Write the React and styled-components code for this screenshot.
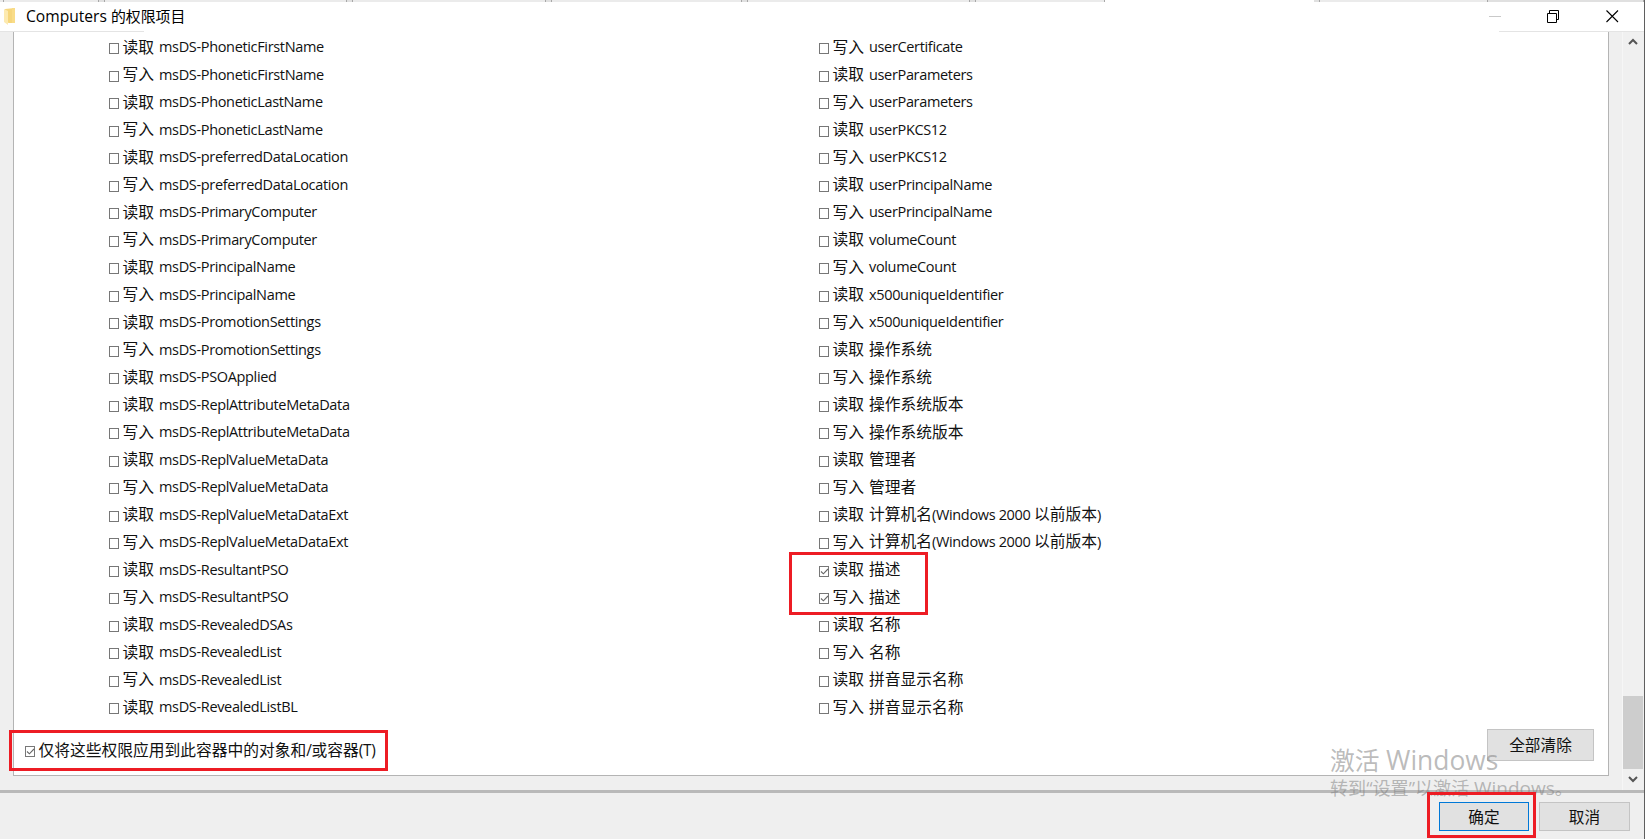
import React, { Fragment } from "react"
import styled, { createGlobalStyle } from "styled-components"

const READ = "读取"
const WRITE = "写入"

const leftItems = [
    [READ, "msDS-PhoneticFirstName"],
    [WRITE, "msDS-PhoneticFirstName"],
    [READ, "msDS-PhoneticLastName"],
    [WRITE, "msDS-PhoneticLastName"],
    [READ, "msDS-preferredDataLocation"],
    [WRITE, "msDS-preferredDataLocation"],
    [READ, "msDS-PrimaryComputer"],
    [WRITE, "msDS-PrimaryComputer"],
    [READ, "msDS-PrincipalName"],
    [WRITE, "msDS-PrincipalName"],
    [READ, "msDS-PromotionSettings"],
    [WRITE, "msDS-PromotionSettings"],
    [READ, "msDS-PSOApplied"],
    [READ, "msDS-ReplAttributeMetaData"],
    [WRITE, "msDS-ReplAttributeMetaData"],
    [READ, "msDS-ReplValueMetaData"],
    [WRITE, "msDS-ReplValueMetaData"],
    [READ, "msDS-ReplValueMetaDataExt"],
    [WRITE, "msDS-ReplValueMetaDataExt"],
    [READ, "msDS-ResultantPSO"],
    [WRITE, "msDS-ResultantPSO"],
    [READ, "msDS-RevealedDSAs"],
    [READ, "msDS-RevealedList"],
    [WRITE, "msDS-RevealedList"],
    [READ, "msDS-RevealedListBL"],
]

const rightItems = [
    [WRITE, "userCertificate"],
    [READ, "userParameters"],
    [WRITE, "userParameters"],
    [READ, "userPKCS12"],
    [WRITE, "userPKCS12"],
    [READ, "userPrincipalName"],
    [WRITE, "userPrincipalName"],
    [READ, "volumeCount"],
    [WRITE, "volumeCount"],
    [READ, "x500uniqueIdentifier"],
    [WRITE, "x500uniqueIdentifier"],
    [READ, "操作系统"],
    [WRITE, "操作系统"],
    [READ, "操作系统版本"],
    [WRITE, "操作系统版本"],
    [READ, "管理者"],
    [WRITE, "管理者"],
    [READ, "计算机名(Windows 2000 以前版本)"],
    [WRITE, "计算机名(Windows 2000 以前版本)"],
    [READ, "描述", true],
    [WRITE, "描述", true],
    [READ, "名称"],
    [WRITE, "名称"],
    [READ, "拼音显示名称"],
    [WRITE, "拼音显示名称"],
]

// Latin runs are set a little smaller than the Chinese glyphs around them
const Mixed = ({ text }) =>
    text.split(/([\x20-\x7e]+)/).map((part, i) => (
        i % 2 ? <Latin key={i}>{part}</Latin> : <Fragment key={i}>{part}</Fragment>
    ))

const CheckMark = () => (
    <svg width="9" height="9" viewBox="0 0 9 9" fill="none" stroke="#666" strokeWidth="1.1">
        <path d="M1 4.5L3.4 6.8L8 2" />
    </svg>
)

const Permission = ({ action, name, checked }) => (
    <Item>
        <CheckBox>{checked && <CheckMark />}</CheckBox>
        <Action>{action}</Action>
        <Name><Mixed text={name} /></Name>
    </Item>
)

const PermissionEntryPage = () => {
    return (
        <Window>
            <GlobalStyle />
            <Backdrop>
                <Tab $width={4} />
                <Tab $width={95} />
                <Tab $width={6} $gap />
                <Tab $width={242} />
                <Tab $width={6} $gap />
                <Tab $width={193} />
                <Tab $width={6} $gap />
                <Tab $width={190} />
                <Tab $width={6} $gap />
                <Tab $width={222} />
                <Tab $width={6} $gap />
                <Tab $width={129} />
                <Blank />
                <Tab $width={6} $gap />
                <Tab $width={168} />
                <Tab $width={156} $gap />
            </Backdrop>
            <TitleBar>
                <svg width="14" height="18" viewBox="0 0 14 18">
                    <path d="M1 1L11 0V15H5L1 14Z" fill="#f6d67c" />
                    <path d="M0 1L4 3V17L0 14Z" fill="#fdeab0" />
                    <path d="M8 0H11V15H8Z" fill="#f9dc88" />
                </svg>
                <Title>Computers <span>的权限项目</span></Title>
                <Controls>
                    <svg width="12" height="13" stroke="#c9c9c9"><path d="M0 6.5H12" /></svg>
                    <svg width="13" height="13" fill="none" stroke="#000">
                        <path d="M0.5 3.5H9.5V12.5H0.5ZM2.5 3.5V0.5H11.5V9.5H9.5" />
                    </svg>
                    <svg width="13" height="13" stroke="#000" strokeWidth="1.1">
                        <path d="M0.5 0.5L12 12M12 0.5L0.5 12" />
                    </svg>
                </Controls>
            </TitleBar>
            <TitleEdge />
            <Body>
                <Panel>
                    <Columns>
                        <Column>
                            {leftItems.map(([action, name], i) => (
                                <Permission key={i} action={action} name={name} />
                            ))}
                        </Column>
                        <Column>
                            {rightItems.map(([action, name, checked], i) => (
                                <Permission key={i} action={action} name={name} checked={checked} />
                            ))}
                            <DescriptionFrame />
                        </Column>
                    </Columns>
                    <PanelFooter>
                        <ApplyOnly>
                            <CheckBox><CheckMark /></CheckBox>
                            <Action><Mixed text="仅将这些权限应用到此容器中的对象和/或容器(T)" /></Action>
                            <ApplyFrame />
                        </ApplyOnly>
                        <ClearButton>全部清除</ClearButton>
                    </PanelFooter>
                </Panel>
                <ScrollBar>
                    <svg width="10" height="8" fill="none" stroke="#555" strokeWidth="2"><path d="M1 6L5 2L9 6" /></svg>
                    <Thumb />
                    <svg width="10" height="8" fill="none" stroke="#555" strokeWidth="2"><path d="M1 2L5 6L9 2" /></svg>
                </ScrollBar>
            </Body>
            <ButtonBar>
                <OkFrame>
                    <DialogButton $primary>确定</DialogButton>
                </OkFrame>
                <DialogButton>取消</DialogButton>
            </ButtonBar>
            <Watermark>
                <h2>激活 <b>Windows</b></h2>
                <p>转到“设置”以激活 <b>Windows</b>。</p>
            </Watermark>
        </Window>
    );
};

const GlobalStyle = createGlobalStyle`
    * {
        box-sizing: border-box;
    }

    body {
        margin: 0;
        overflow: hidden;
        font-family: "Open Sans", "Noto Sans CJK SC", sans-serif;
    }

    svg {
        display: block;
        flex-shrink: 0;
    }
`;

const Window = styled.main`
    position: relative;
    display: flex;
    flex-direction: column;
    width: 1645px;
    height: 839px;
    background: #fff;
    border-right: 1px solid #5f5f5f;
    color: #111;
`;

const Backdrop = styled.div`
    display: flex;
    height: 2px;
`;

const Tab = styled.div`
    width: ${({ $width }) => $width}px;
    background: ${({ $gap }) => ($gap ? "#e0e0e0" : "#ebebeb")};
    border-right: 1px solid #a8a8a8;
`;

const Blank = styled.div`
    width: 209px;
`;

const TitleBar = styled.header`
    display: flex;
    align-items: center;
    height: 29px;
    padding: 0 9px 0 4px;
`;

// hairline under the title bar, visible only near both ends
const TitleEdge = styled.div`
    height: 1px;
    background: linear-gradient(90deg, #e4e4e4 144px, #fff 144px, #fff 1499px, #e4e4e4 1499px);
`;

const Title = styled.h1`
    margin: -1px 0 0 8px;
    font-size: 15.6px;
    font-weight: 400;
    line-height: 22px;
    color: #000;

    span {
        font-size: 14.9px;
    }
`;

const Controls = styled.div`
    display: flex;
    align-items: center;
    gap: 46px;
    margin-left: auto;
    padding-right: 16px;
`;

const Body = styled.section`
    display: flex;
    height: 761px;
    background: #efefef;
    border-bottom: 3px solid #b9b9b9;
`;

const Panel = styled.div`
    display: flex;
    flex-direction: column;
    width: 1596px;
    height: 744px;
    margin-left: 13px;
    background: #fff;
    border: 1px solid #b4b4b4;
    border-top: 0;
`;

const Columns = styled.div`
    display: grid;
    grid-template-columns: 710px 1fr;
    padding: 2px 0 0 95px;
`;

const Column = styled.div`
    position: relative;
`;

const Item = styled.div`
    display: flex;
    align-items: center;
    height: 27.5px;
`;

const CheckBox = styled.i`
    display: flex;
    align-items: center;
    justify-content: center;
    flex-shrink: 0;
    width: 10px;
    height: 11px;
    margin-top: 2px;
    border: 1px solid #777;
`;

const Action = styled.span`
    margin: -2px 0 0 3.5px;
    font-size: 15.75px;
    line-height: 24px;
    white-space: nowrap;
`;

const Name = styled(Action)`
    margin-left: 5px;
`;

const Latin = styled.span`
    font-size: 14.5px;
    letter-spacing: -0.34px;
    white-space: pre;
`;

const PanelFooter = styled.div`
    display: flex;
    justify-content: space-between;
    align-items: flex-start;
    padding: 7px 14px 0 11px;
`;

const ApplyOnly = styled.div`
    position: relative;
    display: flex;
    align-items: center;
    height: 24px;
    margin-top: 10px;

    ${Latin} {
        font-size: 15.5px;
    }
`;

const RedFrame = styled.div`
    position: absolute;
    border: 3px solid #ed1c24;
`;

const DescriptionFrame = styled(RedFrame)`
    left: -30px;
    top: 518px;
    width: 139px;
    height: 63px;
`;

const ApplyFrame = styled(RedFrame)`
    left: -16px;
    top: -9px;
    width: 379px;
    height: 41px;
`;

const Button = styled.button`
    padding: 0;
    background: #e1e1e1;
    border: 1px solid #c4c4c4;
    font-family: inherit;
    font-size: 15.65px;
    color: #111;
`;

const ClearButton = styled(Button)`
    width: 107px;
    height: 32px;
`;

const ScrollBar = styled.div`
    display: flex;
    flex-direction: column;
    align-items: center;
    width: 21px;
    margin-left: 13px;
    padding: 6px 0 7px;
    background: #f0f0f0;
    border-left: 1px solid #f6f6f6;
`;

const Thumb = styled.div`
    width: 20px;
    height: 73px;
    margin-top: auto;
    margin-bottom: 6px;
    background: #cdcdcd;
`;

const ButtonBar = styled.footer`
    display: flex;
    flex: 1;
    padding: 0 14px 0 0;
    justify-content: flex-end;
    align-items: flex-start;
    gap: 3px;
    background: #efefef;
`;

const DialogButton = styled(Button)`
    width: ${({ $primary }) => ($primary ? 90 : 91)}px;
    height: 29px;
    margin-top: ${({ $primary }) => ($primary ? 0 : 9)}px;
    border-color: ${({ $primary }) => ($primary ? "#0078d7" : "#c4c4c4")};
`;

const OkFrame = styled.div`
    position: relative;
    z-index: 1;
    width: 109px;
    height: 46px;
    margin-top: -1px;
    padding: 7px 0 0 9px;
    border: 3px solid #ed1c24;
`;

// sits on top of the whole desktop, like the system overlay
const Watermark = styled.aside`
    position: absolute;
    left: 1330px;
    top: 742px;
    color: rgba(130, 130, 130, 0.55);
    white-space: nowrap;
    pointer-events: none;

    h2, p {
        margin: 0;
        font-weight: 400;
    }

    h2 {
        font-size: 24.8px;
        line-height: 36px;
    }

    p {
        font-size: 18.1px;
        line-height: 20px;
    }

    b {
        font-weight: 400;
    }

    h2 b {
        font-size: 26.4px;
    }

    p b {
        font-size: 19px;
    }
`;

export default PermissionEntryPage;
